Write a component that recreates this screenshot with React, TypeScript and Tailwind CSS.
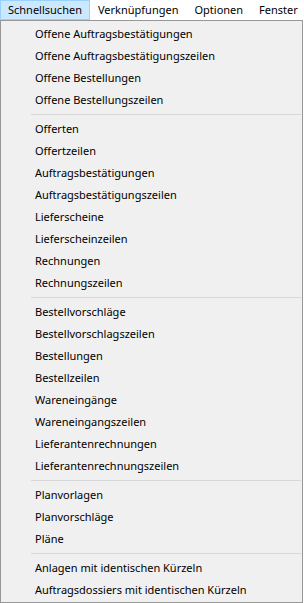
import React from "react";

const groups: string[][] = [
  [
    "Offene Auftragsbestätigungen",
    "Offene Auftragsbestätigungszeilen",
    "Offene Bestellungen",
    "Offene Bestellungszeilen",
  ],
  [
    "Offerten",
    "Offertzeilen",
    "Auftragsbestätigungen",
    "Auftragsbestätigungszeilen",
    "Lieferscheine",
    "Lieferscheinzeilen",
    "Rechnungen",
    "Rechnungszeilen",
  ],
  [
    "Bestellvorschläge",
    "Bestellvorschlagszeilen",
    "Bestellungen",
    "Bestellzeilen",
    "Wareneingänge",
    "Wareneingangszeilen",
    "Lieferantenrechnungen",
    "Lieferantenrechnungszeilen",
  ],
  ["Planvorlagen", "Planvorschläge", "Pläne"],
  ["Anlagen mit identischen Kürzeln", "Auftragsdossiers mit identischen Kürzeln"],
];

const menus = ["Schnellsuchen", "Verknüpfungen", "Optionen", "Fenster"];

export default function App() {
  return (
    <div className="w-[304px] h-[603px] bg-white text-[11px] text-black font-['Noto_Sans',sans-serif] overflow-hidden">
      {/* menu bar */}
      <div className="flex h-[20px]">
        {menus.map((m, i) => (
          <div
            key={m}
            className={
              i === 0
                ? "flex items-center px-[7px] h-[20px] border border-[#99d1ff] bg-[#cce8ff]"
                : "flex items-center px-[8px] h-[20px]"
            }
          >
            {m}
          </div>
        ))}
      </div>

      {/* dropdown */}
      <div className="w-[303px] h-[583px] border border-[#979797] bg-[#f0f0f0] pt-[2px] pb-[1px]">
        {groups.map((g, gi) => (
          <div key={gi}>
            {gi > 0 && (
              <div className="h-[7px] flex items-center pl-[30px] pr-[1px]">
                <div className="h-px w-full bg-[#d7d7d7]" />
              </div>
            )}
            {g.map((item) => (
              <div key={item} className="h-[22px] flex items-center pl-[34px] whitespace-nowrap">
                {item}
              </div>
            ))}
          </div>
        ))}
      </div>
    </div>
  );
}
